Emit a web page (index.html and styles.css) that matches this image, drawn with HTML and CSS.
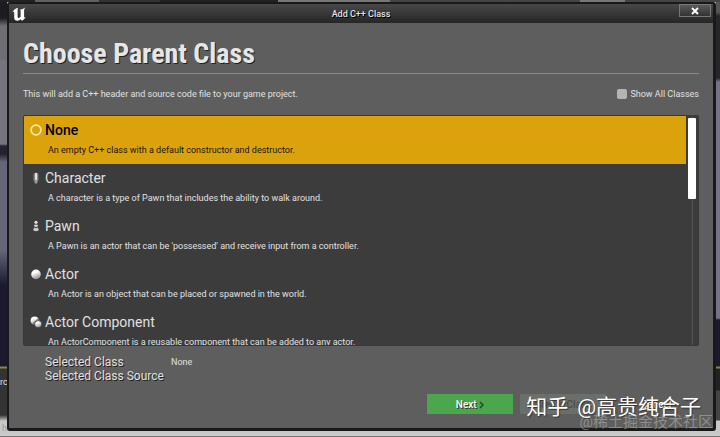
FILE: index.html
```html
<!DOCTYPE html>
<html lang="en">
<head>
  <meta charset="UTF-8">
  <title>Add C++ Class</title>
  <link rel="stylesheet" href="styles.css">
</head>
<body>

<div class="editor-text">rc</div>
<div class="statusbar">h in Classes</div>

<div class="window">
  <header class="titlebar">
    <svg class="logo" viewBox="0 0 14 14">
      <path d="M0.5 5.5C1.5 3 3.5 1.2 6.2 0.8C5.6 1.5 5.6 2 5.6 3V9.6C5.6 10.8 6.4 11.2 7.4 10.7L8.6 9.8V4C8.6 3.2 8.2 2.8 7.7 2.6C9.5 2.3 11.6 1.5 13.4 0.4C12.5 1.5 12.1 2.4 12.1 3.6V9.8C12.1 10.6 12.6 10.7 13.6 10C12.8 11.8 11.4 13.2 9.8 13.7L8.7 12.3C7.8 13.1 6.7 13.7 5.4 13.7C3.4 13.7 2.2 12.6 2.2 10.8V5.2C2.2 4.4 1.4 4.6 0.5 5.5Z"/>
    </svg>
    <span class="caption">Add C++ Class</span>
    <button class="close" aria-label="Close">
      <svg viewBox="0 0 8 8"><path d="M1 1L7 7M7 1L1 7"/></svg>
    </button>
  </header>

  <main class="content">
    <h1>Choose Parent Class</h1>
    <div class="intro">
      <p>This will add a C++ header and source code file to your game project.</p>
      <label class="show-all"><input type="checkbox"> Show All Classes</label>
    </div>

    <div class="list">
      <ul class="classes">
        <li class="item selected">
          <svg class="icon" viewBox="0 0 12 12"><circle cx="6" cy="6" r="4.9" fill="none" stroke="#ffe9a8" stroke-width="1.8"/></svg>
          <h2>None</h2>
          <p>An empty C++ class with a default constructor and destructor.</p>
        </li>
        <li class="item">
          <svg class="icon" viewBox="0 0 12 12">
            <rect x="3.4" y="0.8" width="5.2" height="9" rx="2" fill="#777"/>
            <rect x="4.6" y="0.8" width="2.8" height="10.8" rx="1.2" fill="#999"/>
            <rect x="5.2" y="1" width="1.8" height="7" rx="0.9" fill="#eee"/>
          </svg>
          <h2>Character</h2>
          <p>A character is a type of Pawn that includes the ability to walk around.</p>
        </li>
        <li class="item">
          <svg class="icon" viewBox="0 0 12 12">
            <circle cx="6" cy="2.3" r="1.6" fill="#ddd"/>
            <ellipse cx="6" cy="5.6" rx="2.2" ry="1" fill="#ccc"/>
            <path d="M5 6H7L8.8 9.5Q8.8 11.2 6 11.2Q3.2 11.2 3.2 9.5Z" fill="#ccc"/>
            <path d="M4.5 7.6H7.5" stroke="#3c3c3c"/>
          </svg>
          <h2>Pawn</h2>
          <p>A Pawn is an actor that can be 'possessed' and receive input from a controller.</p>
        </li>
        <li class="item">
          <svg class="icon" viewBox="0 0 12 12">
            <defs>
              <linearGradient id="ball" x1="0" y1="0" x2="0.4" y2="1">
                <stop offset="0.4" stop-color="#fff"/>
                <stop offset="1" stop-color="#999"/>
              </linearGradient>
            </defs>
            <circle cx="6" cy="6.4" r="4.8" fill="url(#ball)"/>
          </svg>
          <h2>Actor</h2>
          <p>An Actor is an object that can be placed or spawned in the world.</p>
        </li>
        <li class="item">
          <svg class="icon" viewBox="0 0 12 12">
            <circle cx="4.6" cy="4.6" r="4" fill="url(#ball)"/>
            <circle cx="8.2" cy="8.2" r="3.6" fill="url(#ball)" stroke="#333" stroke-width="0.8"/>
            <path d="M2.5 8L8 2.8" stroke="#555" stroke-width="0.9"/>
          </svg>
          <h2>Actor Component</h2>
          <p>An ActorComponent is a reusable component that can be added to any actor.</p>
        </li>
      </ul>
      <div class="scrollbar"><div class="thumb"></div></div>
    </div>

    <dl class="summary">
      <dt>Selected Class</dt>
      <dd>None</dd>
      <dt>Selected Class Source</dt>
      <dd></dd>
    </dl>

    <footer class="actions">
      <button class="next">Next <svg viewBox="0 0 5 8"><path d="M1 1L4 4L1 7"/></svg></button>
      <button class="create" disabled>Create Class</button>
      <button class="cancel">Cancel</button>
    </footer>
  </main>
</div>

<div class="mark mark-main"><span>知乎</span><span>@高贵纯合子</span></div>
<div class="mark mark-site">@稀土掘金技术社区</div>

</body>
</html>
```

FILE: styles.css
```css
* {
  box-sizing: border-box;
}

body {
  font-family: Roboto, "Noto Sans CJK SC", sans-serif;
  font-size: 9px;
  line-height: 12px;
  color: #e0e0e0;
  margin: 0;
  padding: 2px 4px 6px 7px;
  min-height: 100vh;
  display: flex;
  position: relative;
  overflow: hidden;
  background:
    linear-gradient(90deg, #222 0 35px, #606064 35px 99px, #333 99px 160px, #222 160px 278px, #777 278px 390px, #444 390px 580px, #777 580px 625px, #444 625px) 0 0 / 100% 2px no-repeat,
    linear-gradient(#1c1c22 0 18px, #6e6e74 26px 60px, #77747f 60px 144px, #222230 146px 154px, #66667a 162px 250px, #1a1a2c 285px 366px, #88854a 367px 368px, #333 369px 415px, #c8c8c8 421px 436px, #777 436px) 0 0 / 7px 100% no-repeat,
    linear-gradient(#555 0 12px, #24262a 16px 78px, #77708a 82px 318px, #1a1a2c 320px 366px, #88854a 367px 368px, #222 369px 390px, #444 391px 420px, #c8c8c8 421px 436px, #777 436px) 100% 0 / 4px 100% no-repeat,
    linear-gradient(#777, #777) 0 100% / 100% 1px no-repeat,
    #c8c8c8;
}

.editor-text {
  position: absolute;
  left: 0;
  top: 376px;
}

.statusbar {
  position: absolute;
  left: 2px;
  bottom: 3px;
  color: #999;
}

/* window frame */

.window {
  flex: 1;
  display: flex;
  flex-direction: column;
  position: relative;
  background: #5e5e5e;
  border: 2px solid #191919;
  border-right-width: 3px;
  border-bottom-width: 3px;
  border-radius: 3px;
}

.titlebar {
  height: 19px;
  display: grid;
  grid-template-columns: 1fr auto 1fr;
  align-items: center;
  background: linear-gradient(#484848, #262626);
}

.logo {
  width: 14px;
  height: 14px;
  margin-left: 3px;
  fill: #fff;
}

.caption {
  font-weight: 500;
  text-shadow: 1px 1px #000;
}

.close {
  justify-self: end;
  align-self: start;
  width: 32px;
  height: 13px;
  margin-right: 2px;
  padding: 0;
  display: flex;
  align-items: center;
  justify-content: center;
  background: linear-gradient(#5a5a5a, #333);
  border: 1px solid #777;
}

.close svg {
  width: 8px;
  height: 8px;
  stroke: #fff;
  stroke-width: 2;
}

.content {
  flex: 1;
  display: flex;
  flex-direction: column;
  padding: 12px 14px 14px;
}

h1 {
  font-family: "Roboto Condensed", Roboto, sans-serif;
  font-size: 28px;
  line-height: 38px;
  font-weight: bold;
  color: #e6e6e6;
  margin: 0;
  text-shadow: 1px 1px #222;
  border-bottom: 1px solid #8a8a8a;
}

.intro {
  display: flex;
  justify-content: space-between;
  align-items: center;
  margin: 14px 0 15px;
}

.intro p {
  margin: 0;
}

.show-all {
  display: flex;
  align-items: center;
  gap: 3px;
}

.show-all input {
  appearance: none;
  width: 10px;
  height: 10px;
  margin: 0;
  border-radius: 2px;
  background: #b4b4b4;
}

/* class list */

.list {
  height: 231px;
  display: flex;
  overflow: hidden;
  background: #3c3c3c;
  border: 1px solid #383838;
  border-radius: 2px;
}

.classes {
  flex: 1;
  list-style: none;
  margin: 0;
  padding: 0;
}

.item {
  height: 48px;
  display: grid;
  grid-template-columns: 12px 1fr;
  column-gap: 3px;
  align-items: center;
  align-content: start;
  padding: 5px 6px;
}

.item h2 {
  font-size: 14px;
  line-height: 18px;
  font-weight: normal;
  margin: 0;
}

.item p {
  grid-column: 2;
  margin: 5px 0 0 3px;
}

.icon {
  width: 12px;
  height: 12px;
}

.selected {
  background: #dba30b;
  color: #1c1400;
}

.selected h2 {
  font-weight: 500;
  color: #000;
}

.scrollbar {
  width: 12px;
  padding: 2px 2px 0 2px;
  background: linear-gradient(#555, #555) 6px 0 / 1px 100% no-repeat;
}

.thumb {
  width: 8px;
  height: 81px;
  background: #fff;
  border-radius: 1px;
}

.summary {
  display: grid;
  grid-template-columns: 126px 1fr;
  align-items: center;
  margin: 9px 0 0 22px;
}

.summary dt {
  font-size: 12px;
  line-height: 14px;
  white-space: nowrap;
  text-shadow: 1px 1px #222;
}

.summary dd {
  margin: 0;
}

.actions {
  display: flex;
  justify-content: flex-end;
  gap: 7px;
  margin-top: auto;
}

.actions button {
  width: 86px;
  height: 20px;
  padding: 0;
  font-family: inherit;
  font-size: 10px;
  font-weight: 500;
  color: #fff;
  background: #6b6f6b;
  border: none;
  text-shadow: 1px 1px #333;
}

.actions .next {
  background: #4ca64c;
}

.next svg {
  width: 5px;
  height: 8px;
  vertical-align: -1px;
  fill: none;
  stroke: #234a23;
  stroke-width: 1.5;
}

.actions .create {
  color: #4c4c4c;
  text-shadow: none;
}

.actions .cancel {
  background: #5e5e5e;
}

/* overlay signatures */

.mark {
  position: absolute;
  white-space: nowrap;
}

.mark-main {
  right: 19px;
  bottom: 18px;
  display: flex;
  gap: 9px;
  font-size: 21px;
  line-height: 24px;
  color: #fff;
  text-shadow: 1px 1px 1px #333;
}

.mark-site {
  right: 7px;
  bottom: 6px;
  font-size: 15px;
  line-height: 18px;
  color: rgba(190, 190, 190, 0.5);
}
```
